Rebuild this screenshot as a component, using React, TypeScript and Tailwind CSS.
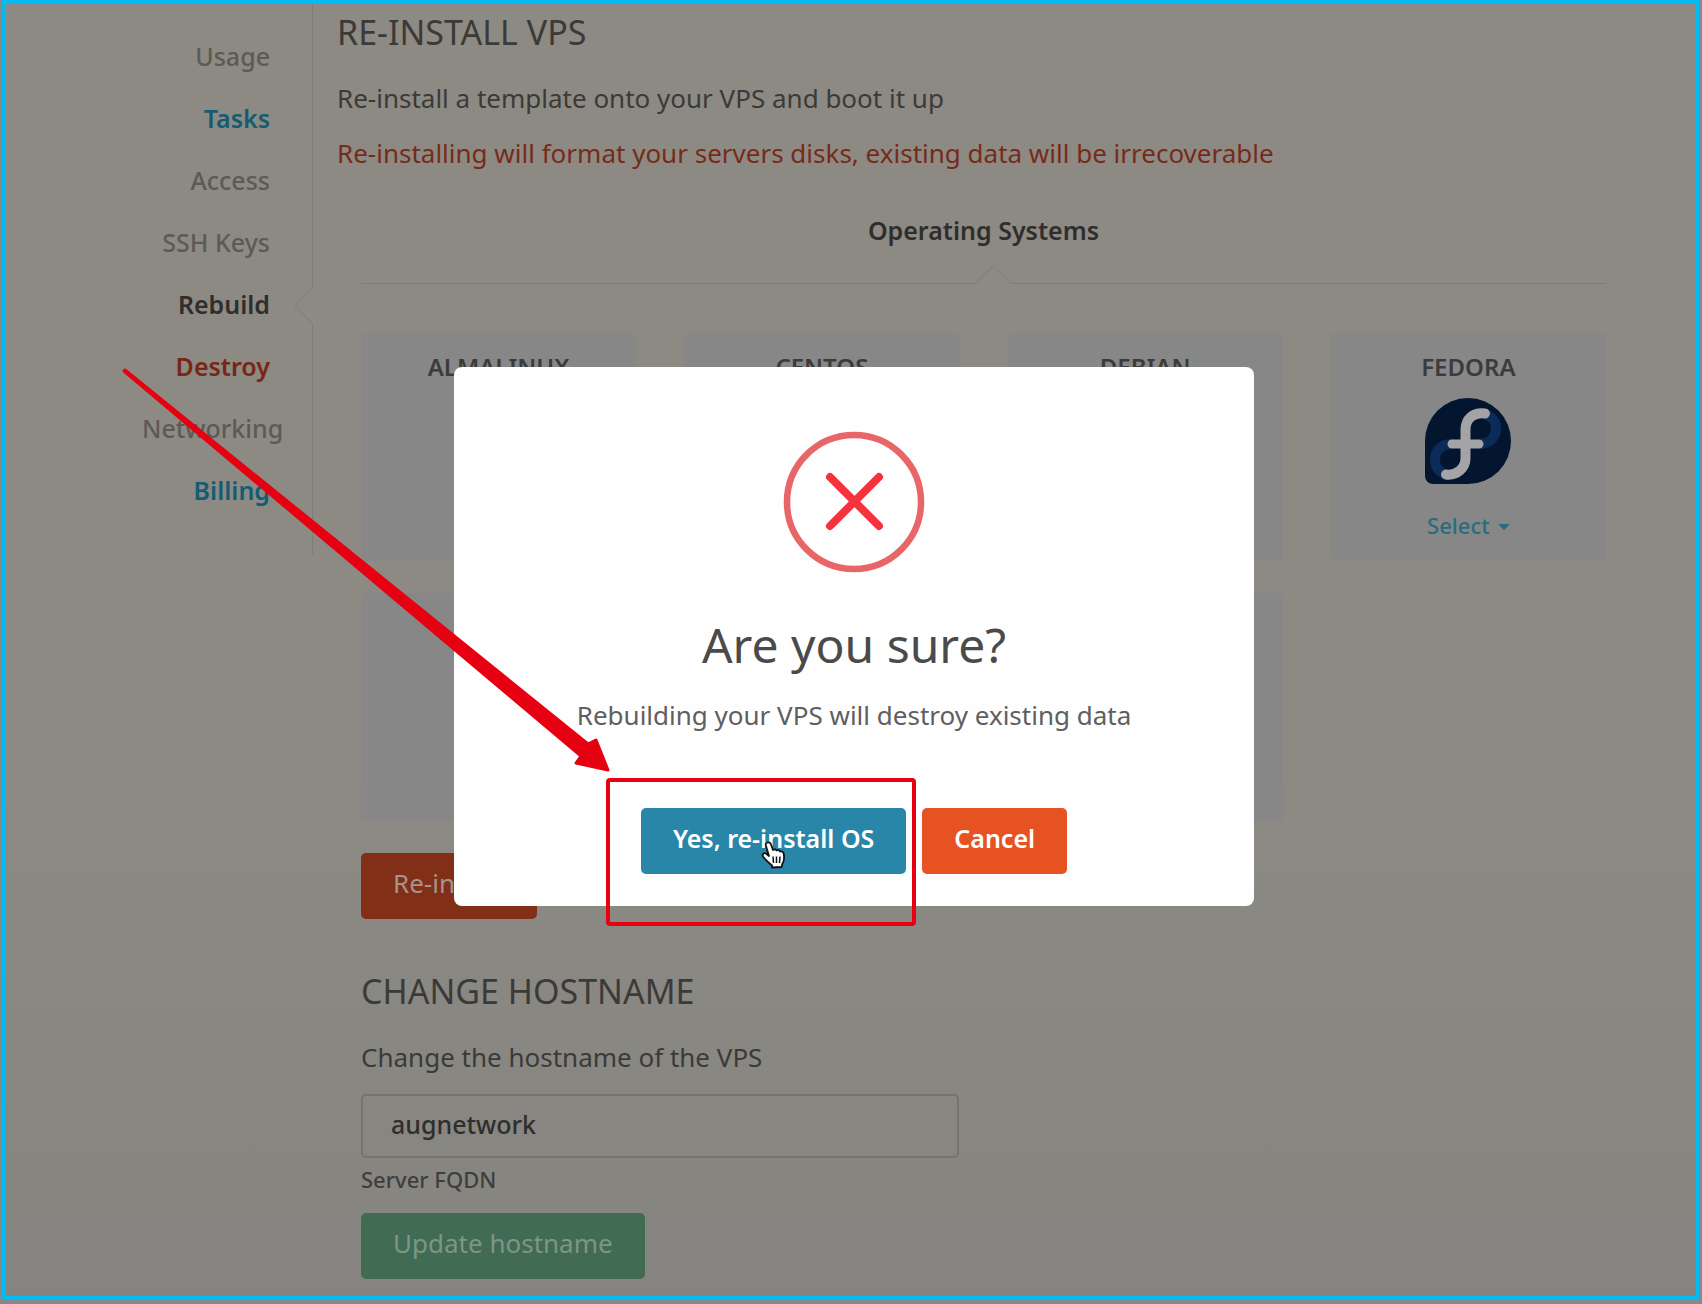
import React from "react";

interface NavItem {
  label: string;
  className: string;
  active?: boolean;
}

const navItems: NavItem[] = [
  { label: "Usage", className: "text-[#5c5a56] font-medium" },
  { label: "Tasks", className: "text-[#145c73] font-semibold" },
  { label: "Access", className: "text-[#5c5a56] font-medium" },
  { label: "SSH Keys", className: "text-[#5c5a56] font-medium" },
  { label: "Rebuild", className: "text-[#2f2e2c] font-semibold", active: true },
  { label: "Destroy", className: "text-[#782616] font-semibold" },
  { label: "Networking", className: "text-[#5c5a56] font-medium" },
  { label: "Billing", className: "text-[#145c73] font-semibold" },
];

interface OsTemplate {
  id: string;
  name?: string;
  logo?: React.ReactNode;
}

const FedoraLogo = () => (
  <svg width="86" height="86" viewBox="0 0 86 86" fill="none" aria-hidden="true">
    <path d="M43 0a43 43 0 0 1 0 86H8a8 8 0 0 1-8-8V43A43 43 0 0 1 43 0Z" fill="#04152f" />
    <g strokeWidth="10" strokeLinecap="round">
      <path d="M60 16C68 19 72 25 71 32C70 40 64 46 54 46" stroke="#0b2c58" />
      <path d="M27 46C17 46 10 52 10 61C10 69 14 74 21 77" stroke="#0b2c58" />
      <path d="M60 15.500C48 14 40.500 21 40.500 32V60C40.500 70 32 78 21 76.500" stroke="#a4a4a6" />
      <path d="M27 46H54" stroke="#a4a4a6" strokeWidth="9" />
    </g>
  </svg>
);

const templates: OsTemplate[] = [
  { id: "almalinux", name: "ALMALINUX" },
  { id: "centos", name: "CENTOS" },
  { id: "debian", name: "DEBIAN" },
  { id: "fedora", name: "FEDORA", logo: <FedoraLogo /> },
  { id: "slot-5" },
  { id: "slot-6" },
  { id: "slot-7" },
];

const Sidebar = () => (
  <aside className="w-[307px] shrink-0">
    <nav className="h-[551px] border-r border-[#7e7d77] pt-[21px] pr-[42px] flex flex-col items-end text-[25px]">
      {navItems.map((item) => (
        <div key={item.label} className="relative w-[128px] h-[62px] leading-[62px] text-right">
          <a href="#" className={`whitespace-nowrap ${item.className}`}>
            {item.label}
          </a>
          {item.active && (
            <svg
              className="absolute top-[15px] -right-[43px]"
              width="20"
              height="36"
              viewBox="0 0 20 36"
              aria-hidden="true"
            >
              <path d="M20 0H18.500L2 18L18.500 36H20Z" fill="#8c8a83" />
              <path d="M19.500 0L2 18L19.500 36" fill="none" stroke="#7f7e78" />
            </svg>
          )}
        </div>
      ))}
    </nav>
  </aside>
);

const OsCard = ({ os }: { os: OsTemplate }) => (
  <div className="h-[228px] rounded-sm bg-[#878787] flex flex-col items-center pt-5">
    {os.name && (
      <h3 className="text-[24px] leading-7 font-semibold text-[#3b3b3b]">{os.name}</h3>
    )}
    {os.logo && (
      <>
        <div className="mt-[17px]">{os.logo}</div>
        <button className="mt-[27px] flex items-center gap-2 text-[22px] leading-7 font-medium text-[#276c80]">
          Select
          <span className="mt-1 border-x-[6px] border-t-[6px] border-x-transparent border-t-[#276c80]" />
        </button>
      </>
    )}
  </div>
);

const OsPicker = () => (
  <section className="pl-6">
    <div className="mt-[41px] flex justify-center border-b border-[#7e7d77]">
      <button className="relative pb-[35px] text-[25px] font-semibold text-[#2f2e2c]">
        Operating Systems
        <svg
          className="absolute left-1/2 -bottom-px -ml-2"
          width="36"
          height="20"
          viewBox="0 0 36 20"
          aria-hidden="true"
        >
          <path d="M0 20V19.500L18 2L36 19.500V20Z" fill="#8c8a83" />
          <path d="M0 19.500L18 2L36 19.500" fill="none" stroke="#7f7e78" />
        </svg>
      </button>
    </div>
    <div className="mt-[49px] grid grid-cols-4 gap-x-12 gap-y-8">
      {templates.map((os) => (
        <OsCard key={os.id} os={os} />
      ))}
    </div>
    <button className="mt-8 h-[66px] px-8 pb-1.5 rounded-[5px] bg-[#812f17] text-[#a8928a]">
      Re-install
    </button>
  </section>
);

const HostnameForm = () => (
  <form className="pl-6 mt-[52px]">
    <h2 className="text-[34px] leading-10 text-[#3b3a38]">CHANGE HOSTNAME</h2>
    <p className="mt-7 text-[#3b3a38]">Change the hostname of the VPS</p>
    <input
      id="hostname"
      type="text"
      defaultValue="augnetwork"
      className="block mt-[19px] w-[48%] h-16 px-7 pb-1 rounded-[5px] border-2 border-[#74736e] bg-transparent text-[25px] font-medium text-[#2f2e2c] outline-none"
    />
    <label htmlFor="hostname" className="block mt-[7px] text-[22px] leading-7 font-medium text-[#3f3e3c]">
      Server FQDN
    </label>
    <button
      type="button"
      className="mt-5 h-[66px] px-8 pb-1.5 rounded-[5px] bg-[#416b53] text-[#7d9687]"
    >
      Update hostname
    </button>
  </form>
);

const HandCursor = () => (
  <svg
    className="absolute left-[120px] top-[33px]"
    width="26"
    height="28"
    viewBox="0 0 26 28"
    aria-hidden="true"
  >
    <path
      d="M6.500 1.500C8.500 .8 9.500 2 10 3.500L12 9C13 8 15 8.200 15.500 9.500C17 8.700 18.500 9.200 19 10.500C21 9.800 22.500 11 22.800 13C23.400 17 23.200 20 21.500 22.500L20.500 26L11 26.500V24.500C8 22 4.500 19 2 15.500C.8 13.500 3 11.500 5 12.500L8 15L4.800 4.500C4.400 3 5 2 6.500 1.500Z"
      fill="#fff"
      stroke="#111"
      strokeWidth="1.800"
      strokeLinejoin="round"
    />
    <path d="M12 15.500L12.500 22M15.500 15.500V22M19 15.500L18.500 22" stroke="#111" strokeWidth="1.500" />
  </svg>
);

const ConfirmDialog = () => (
  <div className="absolute inset-0 flex items-start justify-center pt-[367px] pl-1.5">
    <div
      role="dialog"
      aria-labelledby="confirm-title"
      className="w-full max-w-[800px] rounded-lg bg-[#fefefe] flex flex-col items-center pt-16 pb-8"
    >
      <svg width="142" height="142" viewBox="0 0 142 142" fill="none" aria-hidden="true">
        <circle cx="71" cy="71" r="67" stroke="#e96668" strokeWidth="6.500" />
        <path d="M47 46L96 95M96 46L47 95" stroke="#f5333f" strokeWidth="8" strokeLinecap="round" />
      </svg>
      <h2 id="confirm-title" className="mt-11 text-[48px] leading-[56px] text-[#4a4a4a]">
        Are you sure?
      </h2>
      <p className="mt-6 text-[#5f5f5f]">Rebuilding your VPS will destroy existing data</p>
      <div className="mt-[75px] flex gap-4 text-[25px] font-semibold text-white">
        <button className="relative h-[66px] px-8 pb-1.5 rounded-[5px] bg-[#2986a9]">
          Yes, re-install OS
          <HandCursor />
        </button>
        <button className="h-[66px] px-8 pb-1.5 rounded-[5px] bg-[#e75223]">Cancel</button>
      </div>
    </div>
  </div>
);

// Red arrow and frame drawn over the confirm button
const Annotation = () => (
  <svg
    className="absolute left-0 top-0 pointer-events-none"
    width="930"
    height="940"
    viewBox="0 0 930 940"
    aria-hidden="true"
  >
    <path
      d="M125 370L588 744L596 740L608 770L576 763L581 756L124 371Z"
      fill="#e60012"
      stroke="#e60012"
      strokeWidth="3"
      strokeLinejoin="round"
    />
    <rect x="608" y="780" width="306" height="144" rx="2" fill="none" stroke="#e60012" strokeWidth="4" />
  </svg>
);

export default function App() {
  return (
    <div className="relative min-h-screen flex flex-col px-[2px] pb-1 bg-[#8b8784] font-['Noto_Sans',sans-serif] text-[26px] leading-9">
      <div className="flex-1 flex border-4 border-[#00bcf2] bg-linear-to-b from-[#8c8a83] from-60% to-[#858480]">
        <Sidebar />
        <main className="flex-1 pt-2 pl-6 pr-[90px]">
          <h2 className="text-[34px] leading-10 text-[#3b3a38]">RE-INSTALL VPS</h2>
          <p className="mt-7 text-[#3b3a38]">Re-install a template onto your VPS and boot it up</p>
          <p className="mt-[19px] text-[#782a1a]">
            Re-installing will format your servers disks, existing data will be irrecoverable
          </p>
          <OsPicker />
          <HostnameForm />
        </main>
      </div>
      <ConfirmDialog />
      <Annotation />
    </div>
  );
}
